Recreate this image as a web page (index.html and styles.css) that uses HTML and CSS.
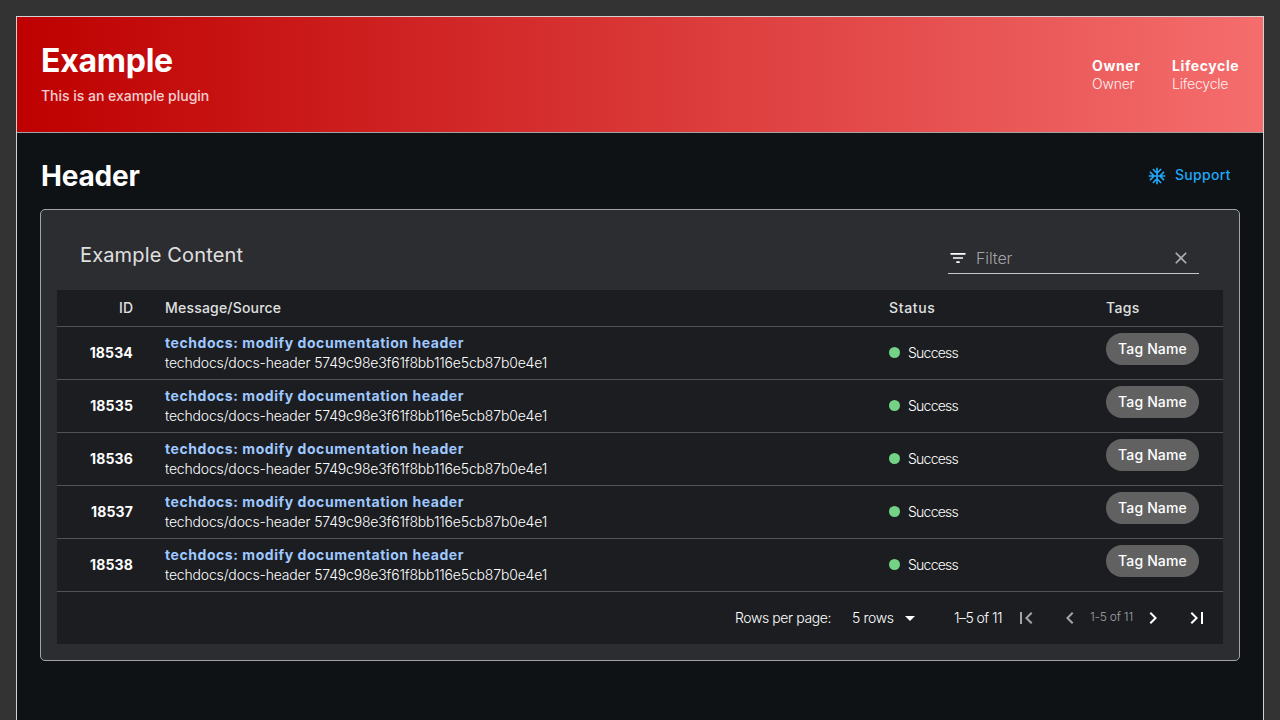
FILE: index.html
```html
<!DOCTYPE html>
<html lang="en">
<head>
<meta charset="utf-8">
<title>Example</title>
<link rel="stylesheet" href="styles.css">
</head>
<body>
<div class="page">
  <header class="banner">
    <div>
      <h1 class="banner-title">Example</h1>
      <p class="banner-subtitle">This is an example plugin</p>
    </div>
    <dl class="meta">
      <div class="meta-owner"><dt>Owner</dt><dd>Owner</dd></div>
      <div class="meta-life"><dt>Lifecycle</dt><dd>Lifecycle</dd></div>
    </dl>
  </header>
  <main class="content">
    <div class="content-header">
      <h2 class="content-title">Header</h2>
      <button class="support"><svg class="icon-sm" viewBox="0 0 24 24"><path d="M22 11h-4.17l3.24-3.24-1.41-1.42L15 11h-2V9l4.66-4.66-1.42-1.41L13 6.17V2h-2v4.17L7.76 2.93 6.34 4.34 11 9v2H9L4.34 6.34 2.93 7.76 6.17 11H2v2h4.17l-3.24 3.24 1.41 1.42L9 13h2v2l-4.66 4.66 1.42 1.41L11 17.83V22h2v-4.17l3.24 3.24 1.42-1.41L13 15v-2h2l4.66 4.66 1.41-1.42L17.83 13H22z"/></svg><span class="support-label">Support</span></button>
    </div>
    <section class="card">
      <div class="toolbar">
        <h3 class="card-title">Example Content</h3>
        <div class="filter">
          <svg class="icon-sm" viewBox="0 0 24 24"><path d="M10 18h4v-2h-4v2zM3 6v2h18V6H3zm3 7h12v-2H6v2z"/></svg>
          <span class="placeholder">Filter</span>
          <svg class="icon-sm clear" viewBox="0 0 24 24"><path d="M19 6.41L17.59 5 12 10.59 6.41 5 5 6.41 10.59 12 5 17.59 6.41 19 12 13.41 17.59 19 19 17.59 13.41 12z"/></svg>
        </div>
      </div>
      <div class="table">
        <div class="row head"><span class="id">ID</span><span class="h-msg">Message/Source</span><span class="h-status">Status</span><span class="h-tags">Tags</span></div>
        <div class="row"><b class="id">18534</b><div class="message"><a>techdocs: modify documentation header</a><span>techdocs/docs-header 5749c98e3f61f8bb116e5cb87b0e4e1</span></div><div class="status"><i class="dot"></i><span>Success</span></div><span class="chip">Tag Name</span></div>
        <div class="row"><b class="id">18535</b><div class="message"><a>techdocs: modify documentation header</a><span>techdocs/docs-header 5749c98e3f61f8bb116e5cb87b0e4e1</span></div><div class="status"><i class="dot"></i><span>Success</span></div><span class="chip">Tag Name</span></div>
        <div class="row"><b class="id">18536</b><div class="message"><a>techdocs: modify documentation header</a><span>techdocs/docs-header 5749c98e3f61f8bb116e5cb87b0e4e1</span></div><div class="status"><i class="dot"></i><span>Success</span></div><span class="chip">Tag Name</span></div>
        <div class="row"><b class="id">18537</b><div class="message"><a>techdocs: modify documentation header</a><span>techdocs/docs-header 5749c98e3f61f8bb116e5cb87b0e4e1</span></div><div class="status"><i class="dot"></i><span>Success</span></div><span class="chip">Tag Name</span></div>
        <div class="row"><b class="id">18538</b><div class="message"><a>techdocs: modify documentation header</a><span>techdocs/docs-header 5749c98e3f61f8bb116e5cb87b0e4e1</span></div><div class="status"><i class="dot"></i><span>Success</span></div><span class="chip">Tag Name</span></div>
        <div class="pager">
          <span class="rpp">Rows per page:</span>
          <span class="select"><span>5 rows</span><svg class="icon" viewBox="0 0 24 24"><path d="M7 10l5 5 5-5z"/></svg></span>
          <span class="range">1–5 of 11</span>
          <svg class="icon off" viewBox="0 0 24 24"><path d="M18.41 16.59L13.82 12l4.59-4.59L17 6l-6 6 6 6zM6 6h2v12H6z"/></svg>
          <svg class="icon off prev" viewBox="0 0 24 24"><path d="M15.41 7.41L14 6l-6 6 6 6 1.41-1.41L10.83 12z"/></svg>
          <span class="range-small">1-5 of 11</span>
          <svg class="icon" viewBox="0 0 24 24"><path d="M10 6L8.59 7.41 13.17 12l-4.58 4.59L10 18l6-6z"/></svg>
          <svg class="icon last" viewBox="0 0 24 24"><path d="M5.59 7.41L10.18 12l-4.59 4.59L7 18l6-6-6-6zM16 6h2v12h-2z"/></svg>
        </div>
      </div>
    </section>
  </main>
</div>
</body>
</html>
```
FILE: styles.css
```css
* { box-sizing: border-box; margin: 0; }
body {
  height: 720px;
  overflow: hidden;
  padding: 16px 16px 0;
  background: #333;
  color: #fff;
  font: 300 14px/20px Inter, "Open Sans", sans-serif;
  white-space: nowrap;
}
svg { display: block; fill: currentColor; flex: none; }
.icon { width: 24px; height: 24px; }
.icon-sm { width: 20px; height: 20px; }

.page { height: 740px; border: 1px solid #d2d2d2; background: #0f1214; }
.banner {
  display: flex;
  justify-content: space-between;
  align-items: center;
  height: 116px;
  padding: 0 24px;
  border-bottom: 1px solid #a3a3a3;
  background: linear-gradient(90deg, #be0000, #f56d6d);
}
.banner-title { margin-top: -2px; font-size: 32px; line-height: 40px; font-weight: 700; letter-spacing: -0.25px; }
.banner-subtitle { margin-top: 5px; font-weight: 500; opacity: .8; letter-spacing: -0.02px; }
.meta { display: flex; }
.meta-owner { width: 80px; }
.meta-life { width: 67px; }
.meta dt { font-weight: 700; line-height: 18px; letter-spacing: .6px; }
.meta dd { line-height: 18px; opacity: .9; letter-spacing: -0.2px; }

.content { padding: 22px 23px 0; }
.content-header { display: flex; justify-content: space-between; align-items: center; height: 42px; }
.content-title { padding-left: 1px; font-size: 28px; line-height: 40px; font-weight: 700; letter-spacing: -0.2px; }
.support {
  display: flex;
  align-items: center;
  gap: 8px;
  width: 93px;
  padding: 0;
  border: 0;
  background: none;
  color: #1fa7f8;
  font: 500 14px/20px Inter, "Open Sans", sans-serif;
}
.support-label { margin-bottom: 2px; letter-spacing: .3px; }

.card {
  height: 452px;
  margin-top: 12px;
  padding: 0 16px;
  border: 1px solid #a3a3a3;
  border-radius: 5px;
  background: #2c2d31;
}
.toolbar { display: flex; justify-content: space-between; height: 80px; padding: 30px 24px 0 23px; }
.card-title { font-size: 20px; line-height: 30px; font-weight: 400; color: #e0e0e0; letter-spacing: .15px; }
.filter {
  display: flex;
  align-items: center;
  width: 251px;
  height: 32px;
  margin-top: 2px;
  border-bottom: 1px solid #c6c7c8;
  color: #fff;
}
.placeholder { flex: 1; padding-left: 8px; font-size: 16px; color: #a3a3a4; letter-spacing: -0.1px; }
.clear { margin-right: 8px; color: #b0b0b1; }

.table { background: #1b1d21; }
.row {
  display: grid;
  grid-template-columns: 76px 756px 217px 93px;
  align-items: center;
  height: 53px;
  border-bottom: 1px solid #515255;
}
.head { height: 37px; color: #e0e0e0; font-weight: 500; }
.row > :nth-child(2) { padding-left: 32px; }
.h-msg { letter-spacing: .2px; }
.h-status { letter-spacing: .65px; }
.h-tags { letter-spacing: .3px; }
.id { text-align: right; }
b.id { font-weight: 700; letter-spacing: .15px; }
.message { display: flex; flex-direction: column; }
.message a { color: #9ec8ff; font-weight: 700; letter-spacing: .56px; }
.message span { letter-spacing: -0.17px; }
.status { display: flex; align-items: center; gap: 8px; letter-spacing: -0.75px; }
.dot { width: 11px; height: 11px; margin-bottom: 1px; border-radius: 50%; background: #73d286; }
.chip {
  height: 32px;
  margin-bottom: 8px;
  border-radius: 16px;
  background: #616161;
  line-height: 32px;
  font-weight: 500;
  letter-spacing: .15px;
  text-align: center;
}
.pager { display: flex; align-items: center; height: 52px; padding-left: 678px; }
.rpp { width: 117px; letter-spacing: -0.4px; }
.select { display: flex; align-items: center; width: 102px; letter-spacing: -0.35px; }
.select span { width: 46px; padding-bottom: 1px; }
.range { width: 60px; letter-spacing: -0.55px; }
.range-small { width: 59px; padding-left: 8px; padding-bottom: 2px; font-size: 12px; color: #a3a3a4; letter-spacing: -0.2px; }
.off { color: #a4a5a6; }
.prev, .last { margin-left: 20px; }
```
